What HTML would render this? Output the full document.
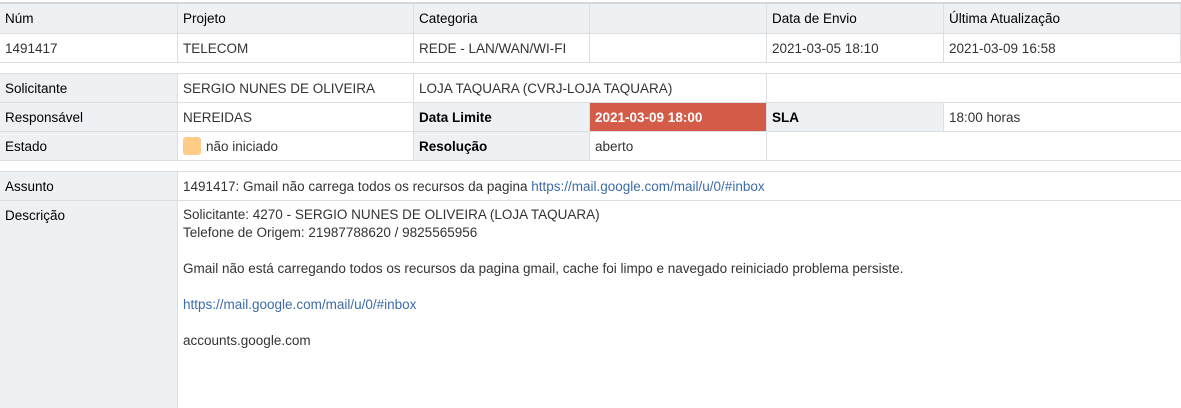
<!DOCTYPE html>
<html><head><meta charset="utf-8"><style>
body{margin:0;width:1181px;height:408px;background:#fff;font-family:"Liberation Sans",Arial,sans-serif;font-size:13.5px;color:#333;position:relative;overflow:hidden}
.c{position:absolute;box-sizing:border-box;padding-left:5px;line-height:29px;border-bottom:1px solid #dcdfe2;border-right:1px solid #dcdfe2;white-space:nowrap}
.h{background:#edf1f4;color:#000}
.b{font-weight:bold}
a{color:#3d6ca8;text-decoration:none}
</style></head><body>
<div style="position:absolute;left:0;top:2px;width:1181px;height:2px;background:#d6d6d6"></div>
<div class="c h" style="left:0;top:4px;width:178px;height:30px">Núm</div>
<div class="c h" style="left:178px;top:4px;width:236px;height:30px">Projeto</div>
<div class="c h" style="left:414px;top:4px;width:176px;height:30px">Categoria</div>
<div class="c h" style="left:590px;top:4px;width:177px;height:30px"></div>
<div class="c h" style="left:767px;top:4px;width:177px;height:30px">Data de Envio</div>
<div class="c h" style="left:944px;top:4px;width:237px;height:30px">Última Atualização</div>
<div class="c" style="left:0;top:34px;width:178px;height:29px">1491417</div>
<div class="c" style="left:178px;top:34px;width:236px;height:29px">TELECOM</div>
<div class="c" style="left:414px;top:34px;width:176px;height:29px">REDE - LAN/WAN/WI-FI</div>
<div class="c" style="left:590px;top:34px;width:177px;height:29px"></div>
<div class="c" style="left:767px;top:34px;width:177px;height:29px">2021-03-05 18:10</div>
<div class="c" style="left:944px;top:34px;width:237px;height:29px">2021-03-09 16:58</div>
<div style="position:absolute;left:0;top:73px;width:1181px;height:1px;background:#dcdfe2"></div>
<div class="c h" style="left:0;top:74px;width:178px;height:29px">Solicitante</div>
<div class="c" style="left:178px;top:74px;width:236px;height:29px">SERGIO NUNES DE OLIVEIRA</div>
<div class="c" style="left:414px;top:74px;width:353px;height:29px">LOJA TAQUARA (CVRJ-LOJA TAQUARA)</div>
<div class="c" style="left:767px;top:74px;width:414px;height:29px;border-right:none"></div>
<div class="c h" style="left:0;top:103px;width:178px;height:29px">Responsável</div>
<div class="c" style="left:178px;top:103px;width:236px;height:29px">NEREIDAS</div>
<div class="c h b" style="left:414px;top:103px;width:176px;height:29px">Data Limite</div>
<div class="c b" style="left:590px;top:103px;width:177px;height:29px;background:#d35b48;color:#fff">2021-03-09 18:00</div>
<div class="c h b" style="left:767px;top:103px;width:177px;height:29px">SLA</div>
<div class="c" style="left:944px;top:103px;width:237px;height:29px;border-right:none">18:00 horas</div>
<div class="c h" style="left:0;top:132px;width:178px;height:29px">Estado</div>
<div class="c" style="left:178px;top:132px;width:236px;height:29px"><span style="display:inline-block;width:18px;height:18px;background:#ffcc88;border-radius:3px;vertical-align:-4px;margin-right:5px"></span>não iniciado</div>
<div class="c h b" style="left:414px;top:132px;width:176px;height:29px">Resolução</div>
<div class="c" style="left:590px;top:132px;width:177px;height:29px">aberto</div>
<div class="c" style="left:767px;top:132px;width:414px;height:29px;border-right:none"></div>
<div style="position:absolute;left:0;top:171px;width:1181px;height:1px;background:#dcdfe2"></div>
<div class="c h" style="left:0;top:172px;width:178px;height:29px">Assunto</div>
<div class="c" style="left:178px;top:172px;width:1003px;height:29px;border-right:none">1491417: Gmail não carrega todos os recursos da pagina <a>https://mail.google.com/mail/u/0/#inbox</a></div>
<div class="c h" style="left:0;top:201px;width:178px;height:207px;border-bottom:none">Descrição</div>
<div style="position:absolute;left:183px;top:206px;line-height:18px">Solicitante: 4270 - SERGIO NUNES DE OLIVEIRA (LOJA TAQUARA)<br>Telefone de Origem: 21987788620 / 9825565956<br><br>Gmail não está carregando todos os recursos da pagina gmail, cache foi limpo e navegado reiniciado problema persiste.<br><br><a>https://mail.google.com/mail/u/0/#inbox</a><br><br>accounts.google.com</div>
</body></html>
